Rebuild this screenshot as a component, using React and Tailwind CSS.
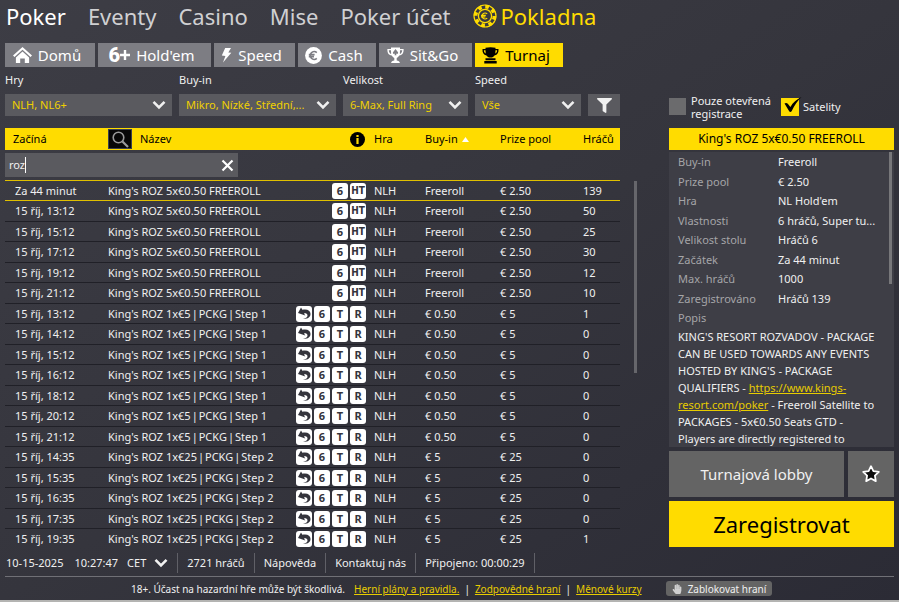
import React, { useState } from 'react';
import { FaFilter, FaHandPaper } from 'react-icons/fa';

const NAV_ITEMS = ['Poker', 'Eventy', 'Casino', 'Mise', 'Poker účet'];

const FILTERS = [
    { id: 'games', label: 'Hry', value: 'NLH, NL6+' },
    { id: 'buyin', label: 'Buy-in', value: 'Mikro, Nízké, Střední,...' },
    { id: 'size', label: 'Velikost', value: '6-Max, Full Ring' },
    { id: 'speed', label: 'Speed', value: 'Vše' },
];

const freeroll = (start, players) => ({
    start, players, name: "King's ROZ 5x€0.50 FREEROLL", tags: ['6', 'HT'], buyin: 'Freeroll', prize: '€ 2.50',
});
const step1 = (start, players) => ({
    start, players, name: "King's ROZ 1x€5|PCKG|Step 1", tags: ['undo', '6', 'T', 'R'], buyin: '€ 0.50', prize: '€ 5',
});
const step2 = (start, players) => ({
    start, players, name: "King's ROZ 1x€25|PCKG|Step 2", tags: ['undo', '6', 'T', 'R'], buyin: '€ 5', prize: '€ 25',
});

const TOURNAMENTS = [
    freeroll('Za 44 minut', 139),
    freeroll('15 říj, 13:12', 50),
    freeroll('15 říj, 15:12', 25),
    freeroll('15 říj, 17:12', 30),
    freeroll('15 říj, 19:12', 12),
    freeroll('15 říj, 21:12', 10),
    step1('15 říj, 13:12', 1),
    step1('15 říj, 14:12', 0),
    step1('15 říj, 15:12', 0),
    step1('15 říj, 16:12', 0),
    step1('15 říj, 18:12', 0),
    step1('15 říj, 20:12', 0),
    step1('15 říj, 21:12', 0),
    step2('15 říj, 14:35', 0),
    step2('15 říj, 15:35', 0),
    step2('15 říj, 16:35', 0),
    step2('15 říj, 17:35', 0),
    step2('15 říj, 19:35', 1),
];

const DETAILS = [
    ['Buy-in', 'Freeroll'],
    ['Prize pool', '€ 2.50'],
    ['Hra', "NL Hold'em"],
    ['Vlastnosti', '6 hráčů, Super tu...'],
    ['Velikost stolu', 'Hráčů 6'],
    ['Začátek', 'Za 44 minut'],
    ['Max. hráčů', '1000'],
    ['Zaregistrováno', 'Hráčů 139'],
];

const ChevronIcon = ({ className }) => (
    <svg className={className} viewBox="0 0 14 10" fill="none" stroke="currentColor" strokeWidth="2.6">
        <path d="M1.5 1.8 7 7.4l5.5-5.6" />
    </svg>
);

const HomeIcon = () => (
    <svg className="h-[18px] w-[19px]" viewBox="0 0 19 18" fill="currentColor">
        <path d="M9.5 1 0 9.6l1.5 1.5 8-7.3 8 7.3L19 9.6z" />
        <path d="m9.5 5.6-6.6 6V17h4.3v-4.6h4.6V17h4.3v-5.4z" />
    </svg>
);

const SixPlusIcon = () => (
    <span className="flex items-center font-['Roboto'] font-black">
        <span className="text-[20px] leading-5">6</span>
        <svg className="h-[10px] w-[10px]" viewBox="0 0 10 10" fill="currentColor">
            <path d="M3.8 0h2.4v3.8H10v2.4H6.2V10H3.8V6.2H0V3.8h3.8z" />
        </svg>
    </span>
);

const BoltIcon = () => (
    <svg className="h-4 w-[11px]" viewBox="0 0 11 16" fill="currentColor">
        <path d="M4.2 1H10L7.3 5.4l3 .3L2 15.5l2.4-6.6L.8 8.6z" />
    </svg>
);

const EuroIcon = () => (
    <svg className="size-[17px]" viewBox="0 0 17 17">
        <circle cx="8.5" cy="8.5" r="8.4" fill="currentColor" />
        <path d="M11.8 5.6A3.9 3.9 0 1 0 11.8 11.4M3.8 7.6h5.8M3.8 9.6h5.2" fill="none" stroke="#7d7d83" strokeWidth="1.6" />
    </svg>
);

const SitGoIcon = () => (
    <svg className="h-[17px] w-[17px]" viewBox="0 0 17 17" fill="currentColor">
        <path d="M4 .5h9v1.4h3.6c.2 3.6-1 6-4.3 6.7-.8 1.3-1.6 2-2.6 2.3v2.6c1.8.3 3 1 3.2 2.5H4.1c.2-1.5 1.4-2.2 3.2-2.5v-2.6c-1-.3-1.8-1-2.6-2.3C1.4 7.9.2 5.5.4 1.9H4zm-2.2 2.7c.1 1.9.8 3.1 2.3 3.7L4 3.2zm13.4 0H13l-.1 3.7c1.5-.6 2.2-1.8 2.3-3.7z" />
        <path d="M8.500 2 6 5.300c-.6 1.300.9 2.200 2 1.300l-.5 1.600h2L9 6.600c1.100.9 2.600 0 2-1.300z" fill="#7d7d83" />
    </svg>
);

const TrophyIcon = () => (
    <svg className="h-[17px] w-[17px]" viewBox="0 0 17 17" fill="currentColor">
        <path d="M3.5.8C6.5.1 10.5.1 13.5.8V1.900h3c.3 3.600-1 5.800-4 6.600-.8 1-1.500 1.600-2.500 1.900H7c-1-.3-1.700-.9-2.500-1.900-3-.8-4.300-3-4-6.600h3zM1.900 3.200c.1 1.700.6 2.700 1.800 3.300l-.2-3.300zm13.200 0h-1.600l-.2 3.300c1.200-.6 1.700-1.600 1.800-3.300z" />
        <path d="M3.5 11.3h10v1.9h-10zM2.300 14h12.400v2.600H2.300z" />
    </svg>
);

const ChipIcon = () => (
    <svg className="size-6" viewBox="0 0 24 24" fill="none" stroke="currentColor">
        <circle cx="12" cy="12" r="11" strokeWidth="1.2" />
        <circle cx="12" cy="12" r="9.4" strokeWidth="3.6" strokeDasharray="3.69 3.69" />
        <circle cx="12" cy="12" r="6.6" strokeWidth="1.3" />
        <path d="M14.2 9.9A3 3 0 1 0 14.2 14.1M8 11.4h4.8M8 12.8h4.4" strokeWidth="1.2" />
    </svg>
);

const UndoIcon = () => (
    <svg className="size-4" viewBox="0 0 16 16">
        <path d="M2 7 5 1.6l1.4 2.1c4.8-1 8 .6 8.1 4.1.1 3.4-2.8 5.4-7.3 5.2 3-.7 4.5-2.1 4.3-3.7-.3-1.7-1.7-2.1-3.5-1.9l1.3 2z" fill="#34343c" />
    </svg>
);

const Tag = ({ kind }) => (
    <span className="flex size-4 items-center justify-center rounded-[3px] bg-white text-[11px] font-bold leading-4 text-[#34343c]">
        {kind === 'undo' ? <UndoIcon /> : kind === 'HT' ? <span className="font-['DejaVu_Sans_Condensed'] text-[10px]">HT</span> : kind}
    </span>
);

// the pipes between the name's parts get a little air
const EventName = ({ name }) =>
    name.split('|').map((part, i) => (
        <React.Fragment key={i}>
            {i > 0 && <span className="px-px">|</span>}
            {part}
        </React.Fragment>
    ));

const TABS = [
    { label: 'Domů', icon: <HomeIcon />, width: 'w-[90px]' },
    { label: "Hold'em", icon: <SixPlusIcon />, width: 'w-[113px]' },
    { label: 'Speed', icon: <BoltIcon />, width: 'w-[81px]' },
    { label: 'Cash', icon: <EuroIcon />, width: 'w-[78px]' },
    { label: 'Sit&Go', icon: <SitGoIcon />, width: 'w-[93px]' },
    { label: 'Turnaj', icon: <TrophyIcon />, width: 'w-[88px]' },
];

const TopNav = () => (
    <nav className="flex h-8 items-center gap-[22px] px-[6px] text-[22px] leading-8 text-[#d0d0d2]">
        {NAV_ITEMS.map((item, i) => (
            <a key={item} href="#" className={i === 0 ? 'text-white' : ''}>{item}</a>
        ))}
        <a href="#" className="flex items-center gap-1 text-[#ffdc00]">
            <ChipIcon />
            Pokladna
        </a>
    </nav>
);

const Tabs = () => (
    <div className="mt-[11px] flex gap-[3px] px-[5px]">
        {TABS.map((tab) => (
            <button
                key={tab.label}
                type="button"
                className={`flex h-6 items-center justify-center gap-[6px] pr-[6px] text-[15px] leading-6 ${tab.width} ${
                    tab.label === 'Turnaj' ? 'bg-[#ffdc00] text-black' : 'bg-[#7d7d83] text-white'
                }`}
            >
                {tab.icon}
                {tab.label}
            </button>
        ))}
    </div>
);

const Filters = () => (
    <div className="grid grid-cols-[167fr_157fr_125fr_106fr_32px] items-end gap-[7px]">
        {FILTERS.map((f) => (
            <div key={f.id} className="min-w-0">
                <label htmlFor={f.id} className="block h-[22px] leading-4">{f.label}</label>
                <div className="relative">
                    <select
                        id={f.id}
                        defaultValue={f.value}
                        className="block h-[22px] w-full appearance-none bg-[#5a5a5f] pl-[7px] leading-4 text-[#f0d000]"
                    >
                        <option>{f.value}</option>
                    </select>
                    <ChevronIcon className="pointer-events-none absolute right-[6px] top-[6px] h-[10px] w-[14px]" />
                </div>
            </div>
        ))}
        <button type="button" aria-label="Filtr" className="flex h-[22px] items-center justify-center bg-[#5a5a5f]">
            <FaFilter className="size-[15px]" />
        </button>
    </div>
);

const TournamentTable = ({ query, setQuery }) => (
    <table className="w-full table-fixed border-separate border-spacing-0 text-left">
        <colgroup>
            <col className="w-[103px]" />
            <col />
            <col className="w-[84px]" />
            <col className="w-[51px]" />
            <col className="w-[75px]" />
            <col className="w-[83px]" />
            <col className="w-[37px]" />
        </colgroup>
        <thead>
            <tr className="h-[22px] bg-[#ffdc00] text-black [&>th]:p-0 [&>th]:font-normal">
                <th><span className="pl-2">Začíná</span></th>
                <th>
                    <span className="flex items-center gap-2">
                        <button type="button" aria-label="Hledat" className="flex h-5 w-6 items-center justify-center border border-[#3a4150] bg-[#080808]">
                            <svg className="size-[17px]" viewBox="0 0 17 17" fill="none" stroke="#9a9a9a">
                                <circle cx="6.5" cy="6.5" r="5.3" strokeWidth="1.6" />
                                <path d="m10.5 10.5 5.5 5.5" strokeWidth="2.2" />
                            </svg>
                        </button>
                        Název
                    </span>
                </th>
                <th>
                    <svg className="ml-auto mr-[9px] size-[15px]" viewBox="0 0 15 15">
                        <circle cx="7.5" cy="7.5" r="7.5" />
                        <path d="M6.4 3h2.200v2H6.400zM6.400 6h2.200v6H6.400z" fill="#ffdc00" />
                    </svg>
                </th>
                <th>Hra</th>
                <th>
                    <span className="flex items-center gap-1">
                        Buy-in
                        <svg className="h-[5px] w-[7px]" viewBox="0 0 7 5" fill="#fff"><path d="M3.5 0 7 5H0z" /></svg>
                    </span>
                </th>
                <th>Prize pool</th>
                <th>Hráčů</th>
            </tr>
            <tr>
                <td colSpan={7} className="p-0 pb-[3px] pt-[3px]">
                    <div className="flex h-6 w-[233px] items-center bg-[#5a5a5f] pl-1 pr-1">
                        <input
                            type="text"
                            aria-label="Název"
                            value={query}
                            onChange={(e) => setQuery(e.target.value)}
                            className="min-w-0 bg-transparent outline-none [field-sizing:content]"
                        />
                        <span className="h-4 w-px bg-white" />
                        <button type="button" aria-label="Smazat" className="ml-auto">
                            <svg className="size-[13px]" viewBox="0 0 13 13" stroke="#fff" strokeWidth="2.2">
                                <path d="m1.5 1.5 10 10M11.5 1.5l-10 10" />
                            </svg>
                        </button>
                    </div>
                </td>
            </tr>
        </thead>
        <tbody className="[&_td]:p-0">
            {TOURNAMENTS.map((row, i) => (
                <tr
                    key={i}
                    className={
                        i === 0
                            ? 'h-[21px] [&>td]:border-b [&>td]:border-t [&>td]:border-b-[#e0c000] [&>td]:border-t-[#e0c000]'
                            : 'odd:h-5 even:h-[21px] [&>td]:border-b [&>td]:border-b-[#202027] last:[&>td]:border-b-transparent'
                    }
                >
                    <td><span className="pl-[10px]">{row.start}</span></td>
                    <td className="whitespace-nowrap"><EventName name={row.name} /></td>
                    <td>
                        <span className="flex justify-end gap-[2px] pr-2">
                            {row.tags.map((tag) => <Tag key={tag} kind={tag} />)}
                        </span>
                    </td>
                    <td>NLH</td>
                    <td>{row.buyin}</td>
                    <td>{row.prize}</td>
                    <td>{row.players}</td>
                </tr>
            ))}
        </tbody>
    </table>
);

const DetailPanel = () => (
    <aside className="mt-[21px] w-[225px] shrink-0">
        <div className="flex h-[27px] items-center leading-[13px]">
            <label className="flex w-28 items-center gap-[5px]">
                <input type="checkbox" className="size-[17px] shrink-0 appearance-none bg-[#6b6b6d]" />
                Pouze otevřená registrace
            </label>
            <label className="flex items-center gap-1">
                <span className="relative flex">
                    <input type="checkbox" defaultChecked className="size-[18px] appearance-none bg-[#ffdc00]" />
                    <svg className="pointer-events-none absolute -top-px left-[3px] h-4 w-[18px]" viewBox="0 0 18 16">
                        <path d="M.5 6.5c1-.9 2.5-.7 3.3.2L6.4 10C9 5.5 12.5 2.3 17.5 0 13.5 3.8 10.5 8 7.6 14.3c-.7.8-1.9.8-2.4-.1z" />
                    </svg>
                </span>
                Satelity
            </label>
        </div>
        <h2 className="mt-2 h-[22px] bg-[#ffdc00] text-center text-[12px] leading-[22px] text-black">King's ROZ 5x€0.50 FREEROLL</h2>
        <div className="mt-[2px] flex h-[295px] overflow-hidden bg-[#3e3e46]">
            <div className="min-w-0 flex-1 pl-[9px]">
                <dl>
                    {DETAILS.map(([label, value]) => (
                        <div key={label} className="flex leading-5 odd:h-5 even:h-[19px]">
                            <dt className="w-[100px] text-[#a5a5a8]">{label}</dt>
                            <dd className="whitespace-nowrap">{value}</dd>
                        </div>
                    ))}
                </dl>
                <h3 className="leading-5 text-[#a5a5a8]">Popis</h3>
                <p className="pr-2 leading-[17px]">
                    KING'S RESORT ROZVADOV - PACKAGE CAN BE USED TOWARDS ANY EVENTS HOSTED BY KING'S - PACKAGE
                    QUALIFIERS - <a href="#" className="text-[#e8cc00] underline">https://www.kings-resort.com/poker</a> - Freeroll Satellite to
                    PACKAGES - 5x€0.50 Seats GTD - Players are directly registered to
                </p>
            </div>
            <div className="mr-[2px] h-[132px] w-[3px] bg-[#77777a]" />
        </div>
        <div className="mt-1 flex gap-1">
            <button type="button" className="h-[46px] flex-1 bg-[#646464] text-[15px]">Turnajová lobby</button>
            <button type="button" aria-label="Oblíbené" className="flex h-[46px] w-[46px] items-center justify-center bg-[#646464]">
                <svg className="size-5" viewBox="0 0 20 20">
                    <path
                        d="m10 2.2 2.4 4.9 5.4.8-3.9 3.8.9 5.4-4.8-2.6-4.8 2.6.9-5.4-3.9-3.8 5.4-.8z"
                        fill="#0c0c0c"
                        stroke="#fff"
                        strokeWidth="1.8"
                        strokeLinejoin="round"
                    />
                </svg>
            </button>
        </div>
        <button type="button" className="mt-1 h-[46px] w-full bg-[#ffdc00] text-[22px] text-black">Zaregistrovat</button>
    </aside>
);

const StatusBar = () => (
    <div className="flex h-[26px] items-center [&>span]:flex [&>span]:h-5 [&>span]:items-center [&>span]:border-r [&>span]:border-[#606067]">
        <span className="pl-px pr-[9px]">
            10-15-2025
            <span className="ml-[11px]">10:27:47</span>
            <button type="button" className="ml-[9px] flex items-center gap-2">
                CET
                <ChevronIcon className="h-[10px] w-[14px]" />
            </button>
        </span>
        <span className="px-[9px]">2721 hráčů</span>
        <span className="px-[9px]"><a href="#">Nápověda</a></span>
        <span className="px-[9px]"><a href="#">Kontaktuj nás</a></span>
        <span className="px-[9px]">Připojeno: 00:00:29</span>
    </div>
);

const Footer = () => (
    <footer className="mx-[5px] flex h-6 items-center border-t border-[#707076] text-[10px]">
        <p className="ml-[126px] flex gap-[5px] [&>a]:text-[#e8cc00] [&>a]:underline">
            <span>18+. Účast na hazardní hře může být škodlivá.</span>
            <a href="#" className="ml-1">Herní plány a pravidla.</a>
            <span>|</span>
            <a href="#">Zodpovědné hraní</a>
            <span>|</span>
            <a href="#">Měnové kurzy</a>
        </p>
        <button type="button" className="ml-6 flex h-[15px] items-center gap-[6px] rounded-[3px] bg-[#646464] px-[6px]">
            <FaHandPaper className="size-[10px] text-[#d0d0d0]" />
            Zablokovat hraní
        </button>
    </footer>
);

const App = () => {
    const [query, setQuery] = useState('roz');

    return (
        <div className="border-b-2 border-[#b4b4b2] bg-linear-to-br from-[#3d3d45] via-[#35353d] to-[#2b2b35] font-['Noto_Sans',sans-serif] text-[11px] leading-4 text-[#f0f0f0]">
            <TopNav />
            <Tabs />
            <main className="flex items-start pl-[5px] pr-[5px] pt-[5px]">
                <div className="min-w-0 flex-1">
                    <Filters />
                    <div className="mt-3">
                        <TournamentTable query={query} setQuery={setQuery} />
                    </div>
                    <StatusBar />
                </div>
                <div className="ml-[14px] mr-8 mt-[109px] h-[192px] w-[3px] shrink-0 bg-[#66666b]" />
                <DetailPanel />
            </main>
            <Footer />
        </div>
    );
};

export default App;
